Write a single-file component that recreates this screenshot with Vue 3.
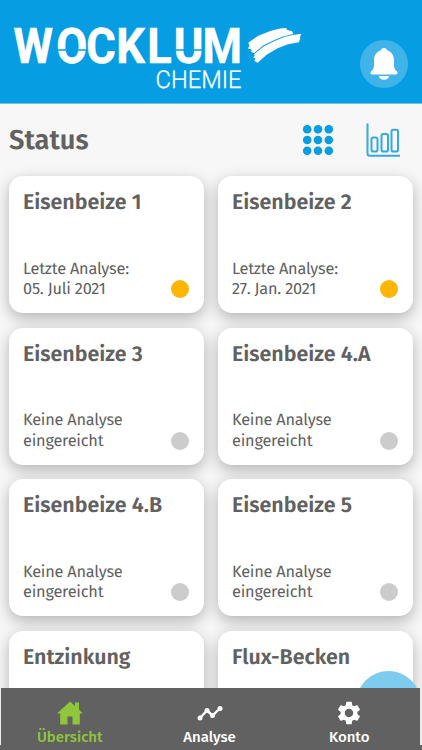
<script setup>
import { ref } from "vue";

const activeTab = ref("overview");

const tanks = [
  { name: "Eisenbeize 1", lines: ["Letzte Analyse:", "05. Juli 2021"], state: "warning" },
  { name: "Eisenbeize 2", lines: ["Letzte Analyse:", "27. Jan. 2021"], state: "warning" },
  { name: "Eisenbeize 3", lines: ["Keine Analyse", "eingereicht"], state: "none" },
  { name: "Eisenbeize 4.A", lines: ["Keine Analyse", "eingereicht"], state: "none" },
  { name: "Eisenbeize 4.B", lines: ["Keine Analyse", "eingereicht"], state: "none" },
  { name: "Eisenbeize 5", lines: ["Keine Analyse", "eingereicht"], state: "none" },
  { name: "Entzinkung", lines: [], state: "" },
  { name: "Flux-Becken", lines: [], state: "" }
];

const dots = [5.2, 16, 26.8];
</script>

<template>
  <div class="app">
    <header class="topbar">
      <svg class="logo" width="300" height="75" viewBox="0 0 300 75" role="img" aria-label="Wocklum Chemie">
        <text class="logo-name" transform="scale(.92 1)" x="0.500 47 79.500 112.300 146 174.600 206" y="45">WOCKLUM</text>
        <path class="logo-cut" d="M44 32H73.500M162.500 32H191" />
        <text class="logo-sub" x="142.500" y="70" textLength="86" lengthAdjust="spacingAndGlyphs">CHEMIE</text>
        <path
          class="logo-brush"
          d="M235.300 24.700L244.700 18L258 12.700L267 10.500L273 10L274.700 12.200L279 13L280.300 16L270 18.400L261.300 21.900L250 27.600L241.300 35L238 33.900L238.700 31.500L234.700 30.500L236.500 28Z"
        />
        <path
          class="logo-brush"
          d="M241 36.300L250.500 28.500L261.500 22.900L272 18.700L280 16.900L288.300 15.700L287 19L287.300 20.500L286 24.300L275 26.300L264.700 30.300L254 36.500L244.700 44.700L241.300 43L242.500 40.300L240 39.500L241.800 37.800Z"
        />
      </svg>
      <button class="bell" type="button" aria-label="Mitteilungen">
        <svg width="28" height="34" viewBox="0 0 28 34">
          <path d="M14 1C12.300 1 11.200 2 11 3.200C6.500 4.500 4 8.500 4 13V18C4 21.500 2.800 22.800 1 24.500C0 25.600.4 27.400 2 27.400H26C27.600 27.400 28 25.600 27 24.500C25.200 22.800 24 21.500 24 18V13C24 8.500 21.500 4.500 17 3.200C16.800 2 15.700 1 14 1Z" />
          <path d="M8.800 29H19.200C18.500 31.700 16.500 32.800 14 32.800C11.500 32.800 9.500 31.700 8.800 29Z" />
        </svg>
      </button>
    </header>

    <main class="content">
      <div class="heading">
        <h1 class="heading-title">Status</h1>
        <div class="views">
          <svg width="32" height="32" viewBox="0 0 32 32">
            <template v-for="y in dots" :key="y">
              <circle v-for="x in dots" :key="x" class="grid-dot" :cx="x" :cy="y" r="4.300" />
            </template>
          </svg>
          <svg class="chart" width="35" height="35" viewBox="0 0 35 35">
            <path d="M1.500.5V30.500Q1.500 32.800 3.800 32.800H34" />
            <rect x="5.500" y="14.500" width="6" height="14" rx="1.800" />
            <rect x="15.500" y="11" width="6.500" height="17.500" rx="1.800" />
            <rect x="25.500" y="6.700" width="6.500" height="21.800" rx="1.800" />
          </svg>
        </div>
      </div>

      <section class="cards">
        <article v-for="tank in tanks" :key="tank.name" class="card">
          <h2 class="card-title">{{ tank.name }}</h2>
          <div v-if="tank.lines.length" class="card-foot">
            <p class="card-text">
              <span v-for="line in tank.lines" :key="line">{{ line }}</span>
            </p>
            <span class="lamp" :class="tank.state"></span>
          </div>
        </article>
      </section>
    </main>

    <div class="fab"></div>

    <nav class="tabs">
      <button class="tab" :class="{ active: activeTab === 'overview' }" type="button" @click="activeTab = 'overview'">
        <svg width="26" height="24" viewBox="0 0 26 24">
          <path d="M13 .5L18 5V1.500H22V8.700L26 12.500H22.800V23.500H15.500V15.500H10.500V23.500H3.200V12.500H0Z" />
        </svg>
        <span>Übersicht</span>
      </button>
      <button class="tab" :class="{ active: activeTab === 'analysis' }" type="button" @click="activeTab = 'analysis'">
        <svg width="26" height="24" viewBox="0 0 26 24">
          <path class="trend" d="M3 17L10 9.500L15.500 14.500L22.800 7.500" />
          <circle cx="3" cy="17" r="2.500" />
          <circle cx="10" cy="9.500" r="2.500" />
          <circle cx="15.500" cy="14.500" r="2.500" />
          <circle cx="23" cy="7.500" r="2.500" />
        </svg>
        <span>Analyse</span>
      </button>
      <button class="tab" :class="{ active: activeTab === 'account' }" type="button" @click="activeTab = 'account'">
        <svg width="28" height="28" viewBox="0 0 24 24">
          <path d="M19.140 12.940c.04-.3.060-.61.060-.94 0-.32-.02-.64-.07-.94l2.030-1.580c.18-.14.230-.41.120-.61l-1.920-3.320c-.12-.22-.37-.29-.59-.22l-2.390.96c-.5-.38-1.030-.7-1.620-.94l-.36-2.540c-.04-.24-.24-.41-.48-.41h-3.840c-.24 0-.43.170-.47.410l-.36 2.540c-.59.240-1.130.570-1.620.940l-2.390-.96c-.22-.08-.47 0-.59.220L2.740 8.870c-.12.210-.08.470.120.610l2.030 1.580c-.05.300-.09.630-.09.940s.02.640.070.940l-2.030 1.580c-.18.140-.23.410-.12.610l1.920 3.320c.12.220.37.290.59.220l2.390-.96c.5.380 1.030.700 1.620.940l.36 2.540c.05.240.24.410.48.410h3.840c.24 0 .44-.17.470-.41l.36-2.540c.59-.24 1.130-.56 1.620-.94l2.390.96c.22.080.47 0 .59-.22l1.920-3.320c.12-.22.070-.47-.12-.61l-2.010-1.580zM12 15.600c-1.980 0-3.600-1.620-3.600-3.600s1.620-3.600 3.600-3.600 3.600 1.620 3.600 3.600-1.620 3.600-3.600 3.600z" />
        </svg>
        <span>Konto</span>
      </button>
    </nav>
  </div>
</template>

<style>
body {
  margin: 0;
  background: #f7f7f7;
}
</style>

<style scoped>
.app {
  position: relative;
  display: flex;
  flex-direction: column;
  width: 422px;
  height: 750px;
  overflow: hidden;
  background: #f7f7f7;
  color: #616161;
  font-family: "Fira Sans", "Noto Sans", sans-serif;
  text-rendering: geometricPrecision;
}

button {
  border: 0;
  padding: 0;
  background: none;
  font: inherit;
  color: inherit;
}

.topbar {
  flex: none;
  display: flex;
  justify-content: space-between;
  box-sizing: border-box;
  height: 104px;
  padding: 18px 14px 0 13px;
  background: #069de2;
  border-bottom: 1px solid #6fc3eb;
}

.logo-name {
  font: 700 49px Roboto, sans-serif;
  fill: #fff;
  stroke: #fff;
  stroke-width: 0.6;
}

.logo-sub {
  font: 300 24.5px Roboto, sans-serif;
  fill: #fff;
  stroke: #fff;
  stroke-width: 0.3;
}

.logo-cut {
  stroke: #069de2;
  stroke-width: 1.6;
}

.logo-brush {
  fill: #fff;
}

.bell {
  display: grid;
  place-items: center;
  width: 48px;
  height: 48px;
  margin-top: 22px;
  border-radius: 50%;
  background: #40b4e9;
}

.bell svg {
  fill: #fff;
}

.content {
  flex: 1;
  min-height: 0;
  padding: 0 9.5px 0 9px;
}

.heading {
  display: flex;
  align-items: center;
  justify-content: space-between;
  height: 72px;
}

.heading-title {
  margin: 0;
  font-size: 27.3px;
  font-weight: 600;
}

.views {
  display: flex;
  align-items: center;
  gap: 31.5px;
  padding-right: 12px;
}

.grid-dot {
  fill: #069de2;
}

.chart {
  fill: none;
  stroke: #35a9e0;
  stroke-width: 2;
}

.cards {
  display: grid;
  grid-template-columns: 1fr 1fr;
  gap: 14.6px 14.5px;
}

.card {
  display: flex;
  flex-direction: column;
  justify-content: space-between;
  box-sizing: border-box;
  height: 137px;
  padding: 12px 14px 12.5px;
  border-radius: 14px;
  background: #fff;
  box-shadow: 0 5px 15px rgba(0, 0, 0, 0.28);
}

.card-title {
  margin: 0;
  font-size: 21.4px;
  font-weight: 600;
  line-height: 28px;
  white-space: nowrap;
}

.card-foot {
  display: flex;
  align-items: flex-end;
  justify-content: space-between;
}

.card-text {
  display: flex;
  flex-direction: column;
  margin: 0;
  font-size: 16.3px;
  line-height: 20.4px;
  letter-spacing: -0.2px;
  white-space: nowrap;
}

.lamp {
  width: 18px;
  height: 18px;
  margin: 0 1px 2.5px 0;
  border-radius: 50%;
}

.lamp.warning {
  background: #fdb603;
}

.lamp.none {
  background: #cccccc;
}

.fab {
  position: absolute;
  right: 1.5px;
  top: 671px;
  width: 65px;
  height: 65px;
  border-radius: 50%;
  background: #7dcbee;
}

.tabs {
  position: relative;
  flex: none;
  display: flex;
  box-sizing: border-box;
  height: 62px;
  background: #616161;
}

.tabs::before,
.tabs::after {
  content: "";
  position: absolute;
  top: 0;
  left: 0;
  width: 1px;
  height: 57px;
  background: #ececec;
}

.tabs::after {
  left: auto;
  right: 0;
  width: 2.5px;
}

.tab {
  flex: 0 0 139.7px;
  display: flex;
  flex-direction: column;
  align-items: center;
  color: #fff;
  font-size: 15px;
  font-weight: 500;
  line-height: 20px;
}

.tab svg {
  flex: none;
  height: 28px;
  margin-top: 11px;
  fill: currentColor;
}

.trend {
  fill: none;
  stroke: currentColor;
  stroke-width: 2.4;
}

.tab.active {
  color: #8fc63a;
}
</style>
